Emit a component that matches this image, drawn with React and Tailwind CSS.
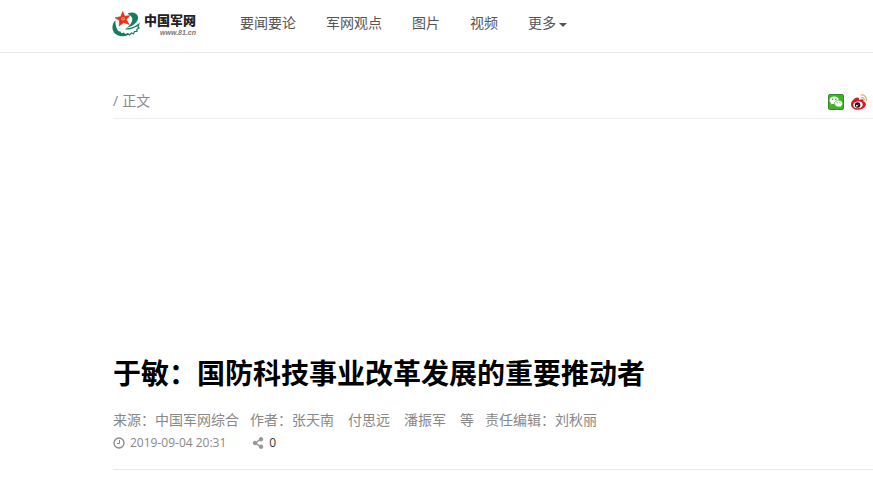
import { FaShareAlt } from 'react-icons/fa';

const navLinks = [
  { name: '要闻要论', path: '#news' },
  { name: '军网观点', path: '#opinion' },
  { name: '图片', path: '#photo' },
  { name: '视频', path: '#video' },
];

function Logo() {
  return (
    <a href="#home" aria-label="中国军网" className="flex items-center gap-1">
      <svg viewBox="0 0 28 26" className="h-[26px] w-7" aria-hidden="true">
        <path
          d="M15.500 2.500C20.500 0.300 25.300 2 26 5.800C26.700 10.500 22 15 14.500 17C18.500 14 20.800 10.800 20.300 7.800C19.900 5.500 18 4 15.500 2.500Z"
          fill="#137d62"
        />
        <path
          d="M3.500 9C0 12.500 -0.500 18 2 21.500C4.500 25 10 26 15 24.500L18 22L6 19.500C4.200 17 3 13 3.500 9Z"
          fill="#137d62"
        />
        <path
          d="M5 17.500C7 15.300 8.500 15.800 9.500 17.200C11.500 15.800 13 16.600 13.500 18C18 18 23 16.300 26.800 13.200L26 16L27 17L24.800 18.500L25 20.500L22.500 20.500L21.500 22.600L19.500 21.700L17.500 23.300L15.500 21.900L13.500 23.100L11.500 21.500L9.500 22.300L8.500 20.400L6.500 20.300Z"
          fill="#fff"
        />
        <path
          d="M13.500 18C18 18 23 16.300 26.800 13.200L26 16L27 17L24.800 18.500L25 20.500L22.500 20.500L21.500 22.800L19.500 22L17.500 24L15.500 22.600"
          fill="none"
          stroke="#137d62"
          strokeWidth="1.200"
        />
        <path
          d="M10.800 0.500L12.600 5.200L18 4.600L14.200 8.600L17.200 13.500L11.700 11.500L7.200 15L7.600 9.500L3 6.800L8.600 5.700Z"
          fill="#e32f1c"
          stroke="#e32f1c"
          strokeWidth="0.600"
        />
        <circle cx="11" cy="7.800" r="1.800" fill="#f8c43c" />
        <path d="M10 7.500h2M11 6.500v2.500" stroke="#e32f1c" strokeWidth="0.600" />
      </svg>
      <span className="flex flex-col items-end">
        <span className="text-[13px] leading-[18px] font-black text-[#222]">中国军网</span>
        <span className="font-['Liberation_Sans',sans-serif] text-[7px] leading-[8px] font-bold text-[#777] italic">
          www.81.cn
        </span>
      </span>
    </a>
  );
}

function WechatIcon() {
  return (
    <svg viewBox="0 0 16 16" className="size-4" aria-hidden="true">
      <rect x="0.500" y="0.500" width="15" height="15" rx="1.500" fill="#43b02a" stroke="#2f8f1d" />
      <path d="M6.200 2.500C3.500 2.500 1.500 4.100 1.500 6.200c0 1.200.7 2.200 1.700 2.900l-.4 1.500 1.700-.9c.5.200 1.100.2 1.700.2 2.600 0 4.700-1.600 4.700-3.700S8.800 2.500 6.200 2.500Z" fill="#fff" />
      <path d="M10.600 6.200c-2.400 0-4.200 1.500-4.200 3.400s1.800 3.400 4.200 3.400c.5 0 1-.1 1.400-.2l1.500.8-.4-1.400c1-.6 1.600-1.500 1.600-2.600 0-1.900-1.800-3.400-4.100-3.400Z" fill="#fff" stroke="#43b02a" strokeWidth="0.700" />
      <g fill="#2f8f1d">
        <circle cx="4.600" cy="5.200" r="0.700" />
        <circle cx="7.800" cy="5.200" r="0.700" />
        <circle cx="9.200" cy="8.800" r="0.600" />
        <circle cx="12" cy="8.800" r="0.600" />
      </g>
    </svg>
  );
}

function WeiboIcon() {
  return (
    <svg viewBox="0 0 16 16" className="size-4" aria-hidden="true">
      <path
        d="M6.200 3.600C4.500 3.400 0 7 0 10.400c0 3.200 3.300 5.300 7 5.300 4.200 0 7.900-2.400 7.900-5.400 0-1.600-1.300-2.500-2.500-2.800.7-1.900-.6-3-4.500-1.300.5-1.600 0-2.500-1.700-2.600Z"
        fill="#dc1520"
      />
      <ellipse cx="7" cy="10.800" rx="4.700" ry="3.300" fill="#fff" transform="rotate(-8 7 10.800)" />
      <circle cx="6.600" cy="11" r="2.700" fill="#111" />
      <circle cx="5.900" cy="11.700" r="0.900" fill="#fff" />
      <circle cx="7.700" cy="10.200" r="0.400" fill="#fff" />
      <path d="M10 1C13.500.4 16 3.300 15.100 6.500M10.600 3.600C12.300 3.200 13.400 4.500 13 6" fill="none" stroke="#f0a050" strokeWidth="1.200" strokeLinecap="round" />
    </svg>
  );
}

function ClockIcon() {
  return (
    <svg viewBox="0 0 12 12" className="size-3" fill="none" stroke="currentColor" aria-hidden="true">
      <circle cx="6" cy="6" r="5" strokeWidth="1.300" />
      <path d="M6.500 3v3.500H4" strokeWidth="1" />
    </svg>
  );
}

export default function App() {
  return (
    <div className="bg-white pb-7 font-['Open_Sans','Noto_Sans_CJK_SC',sans-serif] text-sm leading-5 text-[#888]">
      <header className="border-b border-[#e7e7e7] pl-28">
        <div className="flex h-13 items-center gap-11 pb-1">
          <Logo />
          <nav className="flex items-center gap-[30px] pb-0.5 text-[#555]">
            {navLinks.map((link) => (
              <a key={link.path} href={link.path}>
                {link.name}
              </a>
            ))}
            <button type="button" className="flex items-center gap-[3px]">
              更多
              <svg viewBox="0 0 8 4" className="mt-1 h-1 w-2" fill="currentColor" aria-hidden="true">
                <path d="M0 0h8L4 4Z" />
              </svg>
            </button>
          </nav>
        </div>
      </header>

      <main className="pl-[113px]">
        <div className="mt-9 flex items-end justify-between border-b border-[#eee] pt-0.5 pr-1.5 pb-[7px]">
          <div className="flex gap-1">
            <span>/</span>
            <span>正文</span>
          </div>
          <div className="flex gap-[7px] pb-px">
            <button type="button" aria-label="微信">
              <WechatIcon />
            </button>
            <button type="button" aria-label="微博">
              <WeiboIcon />
            </button>
          </div>
        </div>

        <article className="border-b border-[#e7e7e7] pt-[234px] pb-4">
          <h1 className="text-[28px] leading-10 font-bold text-black">
            于敏：国防科技事业改革发展的重要推动者
          </h1>
          <div className="mt-[17px] flex gap-[11px]">
            <span>来源：中国军网综合</span>
            <span>作者：张天南　付思远　潘振军　等</span>
            <span>责任编辑：刘秋丽</span>
          </div>
          <div className="mt-[3px] flex items-center gap-[26px] text-xs leading-5">
            <span className="flex items-center gap-[5px]">
              <ClockIcon />
              <time dateTime="2019-09-04T20:31">2019-09-04 20:31</time>
            </span>
            <span className="flex items-center gap-[5px]">
              <FaShareAlt className="size-3 text-[#999]" aria-hidden="true" />
              <span className="text-[#333]">0</span>
            </span>
          </div>
        </article>
      </main>
    </div>
  );
}
